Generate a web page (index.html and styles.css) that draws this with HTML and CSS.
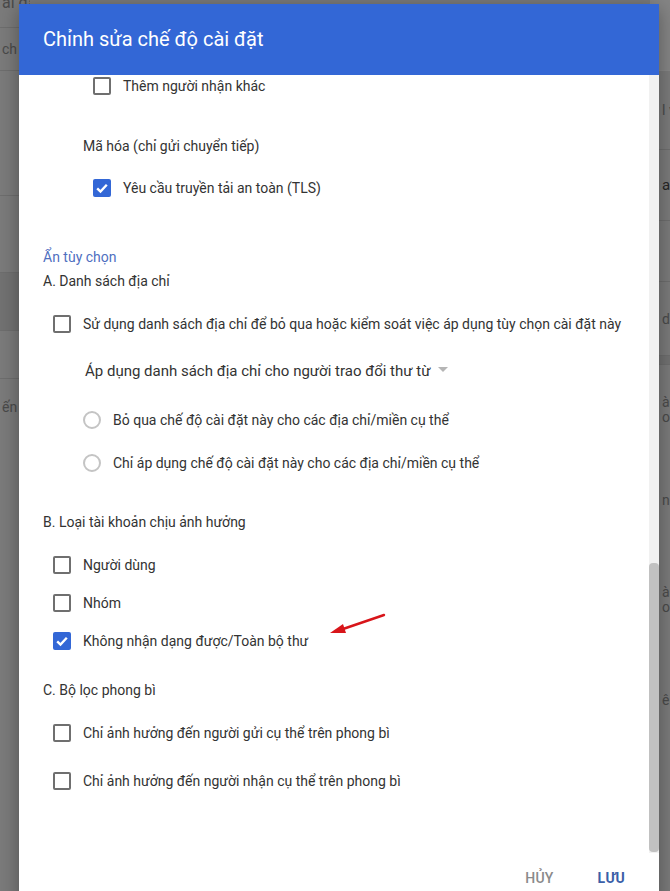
FILE: index.html
```html
<!DOCTYPE html>
<html lang="vi">
<head>
<meta charset="utf-8">
<link rel="stylesheet" href="styles.css">
</head>
<body>
<div class="page">
  <div class="bg-col bg-left">
    <div class="bg-row r1"><span class="bg-text t-top">ài đặt</span></div>
    <div class="bg-row r2"><span class="bg-text">ch</span></div>
    <div class="bg-row r3"></div>
    <div class="bg-row r4"></div>
    <div class="bg-row r5 dark"></div>
    <div class="bg-row r6"></div>
    <div class="bg-row r7"><span class="bg-text">ến</span></div>
  </div>
  <div class="bg-col bg-right">
    <div class="bg-row q1"></div>
    <div class="bg-row q2"><span class="bg-text">l v</span></div>
    <div class="bg-row q3"><span class="bg-text strong">ac</span></div>
    <div class="bg-row q4"></div>
    <div class="bg-row q5"><span class="bg-text">d</span></div>
    <div class="bg-row q6 dark"></div>
    <div class="bg-row q7"><span class="bg-text two">ài<br>on</span></div>
    <div class="bg-row q8"><span class="bg-text">ng</span></div>
    <div class="bg-row q9"><span class="bg-text two">ài<br>on</span></div>
    <div class="bg-row q10"><span class="bg-text">ên</span></div>
  </div>
</div>

<div class="dialog">
  <div class="dialog-header">Chỉnh sửa chế độ cài đặt</div>
  <div class="dialog-body">
    <div class="content">
      <div class="row indent2 m-r1"><span class="cb"></span><span>Thêm người nhận khác</span></div>
      <div class="label indent2-text m-r2">Mã hóa (chỉ gửi chuyển tiếp)</div>
      <div class="row indent2 m-r3"><span class="cb checked"><svg viewBox="0 0 18 18" width="18" height="18"><path d="M4.2 9.3 L7.5 12.5 L13.8 5.8" fill="none" stroke="#fff" stroke-width="2.4"/></svg></span><span>Yêu cầu truyền tải an toàn (TLS)</span></div>
      <div class="link m-r4">Ẩn tùy chọn</div>
      <div class="label m-r5">A. Danh sách địa chỉ</div>
      <div class="row indent1 m-r6"><span class="cb"></span><span>Sử dụng danh sách địa chỉ để bỏ qua hoặc kiểm soát việc áp dụng tùy chọn cài đặt này</span></div>
      <div class="label select m-r7">Áp dụng danh sách địa chỉ cho người trao đổi thư từ <span class="caret"></span></div>
      <div class="row indent-radio m-r8"><span class="radio"></span><span>Bỏ qua chế độ cài đặt này cho các địa chỉ/miền cụ thể</span></div>
      <div class="row indent-radio m-r9"><span class="radio"></span><span>Chỉ áp dụng chế độ cài đặt này cho các địa chỉ/miền cụ thể</span></div>
      <div class="label m-r10">B. Loại tài khoản chịu ảnh hưởng</div>
      <div class="row indent1 m-r11"><span class="cb"></span><span>Người dùng</span></div>
      <div class="row indent1 m-r12"><span class="cb"></span><span>Nhóm</span></div>
      <div class="row indent1 m-r12 has-arrow"><span class="cb checked"><svg viewBox="0 0 18 18" width="18" height="18"><path d="M4.2 9.3 L7.5 12.5 L13.8 5.8" fill="none" stroke="#fff" stroke-width="2.4"/></svg></span><span>Không nhận dạng được/Toàn bộ thư</span>
        <svg class="arrow" width="60" height="26" viewBox="0 0 60 26"><path d="M56 2 L15 16" stroke="#d8151a" stroke-width="2.4" fill="none" stroke-linecap="round"/><path d="M2 20 L15 11 L18 20 Z" fill="#d8151a"/></svg>
      </div>
      <div class="label m-r13">C. Bộ lọc phong bì</div>
      <div class="row indent1 m-r14"><span class="cb"></span><span>Chỉ ảnh hưởng đến người gửi cụ thể trên phong bì</span></div>
      <div class="row indent1 m-r15"><span class="cb"></span><span>Chỉ ảnh hưởng đến người nhận cụ thể trên phong bì</span></div>
    </div>
    <div class="scrollbar"><div class="thumb"></div></div>
  </div>
  <div class="dialog-footer">
    <span class="btn cancel">HỦY</span>
    <span class="btn save">LƯU</span>
  </div>
</div>
</body>
</html>
```

FILE: styles.css
```css
html, body {
  margin: 0;
  padding: 0;
}
body {
  width: 670px;
  height: 891px;
  overflow: hidden;
  background: #7b7b7b;
  font-family: Roboto, "Noto Sans", sans-serif;
  position: relative;
}
.page {
  display: flex;
  justify-content: space-between;
  height: 891px;
}
.bg-col {
  display: flex;
  flex-direction: column;
}
.bg-left { width: 30px; }
.bg-right { width: 20px; }
.bg-row {
  border-bottom: 1px solid #6e6e6e;
  display: flex;
  align-items: center;
  overflow: hidden;
}
.bg-row.dark { background: #727272; }
.bg-text {
  color: #3a3a3a;
  font-size: 14px;
  white-space: nowrap;
  opacity: 0.75;
}
.bg-text.strong { color: #262626; opacity: 1; font-size: 15px; }
.bg-text.two { line-height: 15px; }
.bg-right .bg-text { padding-left: 12px; }
.bg-left .bg-text { padding-left: 2px; }
.t-top { margin-top: -22px; font-size: 16px; }
.r1 { height: 27px; }
.r2 { height: 42px; }
.r3 { height: 124px; }
.r4 { height: 76px; }
.r5 { height: 57px; }
.r6 { height: 47px; }
.r7 { height: 56px; border-bottom: none; }
.q1 { height: 70px; border-bottom-color: #888; background: #858585; }
.q2 { height: 78px; }
.q3 { height: 70px; }
.q4 { height: 60px; }
.q5 { height: 73px; }
.q6 { height: 8px; background: #5e5e5e; }
.q7 { height: 90px; border-bottom: none; }
.q8 { height: 90px; border-bottom: none; }
.q9 { height: 110px; border-bottom: none; }
.q10 { height: 90px; border-bottom: none; }

.dialog {
  position: absolute;
  left: 19px;
  top: 4px;
  width: 640px;
  height: 900px;
  background: #fff;
  box-shadow: 0 4px 20px rgba(0,0,0,0.35);
  display: flex;
  flex-direction: column;
  border-radius: 2px 2px 0 0;
}
.dialog-header {
  height: 71px;
  background: #3367d6;
  color: #fff;
  font-size: 20px;
  display: flex;
  align-items: center;
  padding-left: 24px;
  box-sizing: border-box;
  padding-bottom: 2px;
  flex: none;
}
.dialog-body {
  display: flex;
  flex: none;
  height: 778px;
}
.content {
  flex: 1;
  padding-left: 24px;
  color: #333;
  font-size: 14px;
}
.scrollbar {
  width: 10px;
  background: #f1f1f1;
  padding-top: 488px;
  box-sizing: border-box;
}
.thumb {
  height: 289px;
  background: #c1c1c1;
  border-radius: 4px;
}
.row {
  display: flex;
  align-items: center;
  height: 22px;
  gap: 12px;
}
.label, .link {
  height: 20px;
  display: flex;
  align-items: center;
}
.link { color: #4f6fbf; }
.indent1 { padding-left: 10px; }
.indent2 { padding-left: 50px; }
.indent2-text { padding-left: 40px; }
.indent-radio { padding-left: 40px; }
.select { padding-left: 42px; gap: 6px; font-size: 15px; }
.caret {
  width: 0; height: 0;
  border-left: 5px solid transparent;
  border-right: 5px solid transparent;
  border-top: 5px solid #b5b5b5;
  margin-left: 2px;
  margin-top: -4px;
}
.cb {
  width: 18px;
  height: 18px;
  box-sizing: border-box;
  border: 2px solid #6f6f6f;
  border-radius: 2px;
  flex: none;
  display: flex;
}
.cb.checked {
  border: none;
  background: #3367d6;
}
.radio {
  width: 18px;
  height: 18px;
  box-sizing: border-box;
  border: 2px solid #c4c4c4;
  border-radius: 50%;
  flex: none;
}
.has-arrow { position: relative; }
.arrow {
  position: absolute;
  left: 285px;
  top: -17px;
}
.m-r1 { margin-top: 0; }
.m-r2 { margin-top: 39px; }
.m-r3 { margin-top: 21px; }
.m-r4 { margin-top: 48px; }
.m-r5 { margin-top: 4px; }
.m-r6 { margin-top: 22px; }
.m-r7 { margin-top: 26px; }
.m-r8 { margin-top: 28px; }
.m-r9 { margin-top: 21px; }
.m-r10 { margin-top: 38px; }
.m-r11 { margin-top: 22px; }
.m-r12 { margin-top: 16px; }
.m-r13 { margin-top: 28px; }
.m-r14 { margin-top: 22px; }
.m-r15 { margin-top: 26px; }
.dialog-footer {
  display: flex;
  justify-content: flex-end;
  gap: 44px;
  padding: 17px 34px 0 0;
  font-size: 14px;
  letter-spacing: 0.2px;
}
.btn.cancel { color: #8a8a8a; font-weight: 500; }
.btn.save { color: #3b5fa8; font-weight: 700; }
```
